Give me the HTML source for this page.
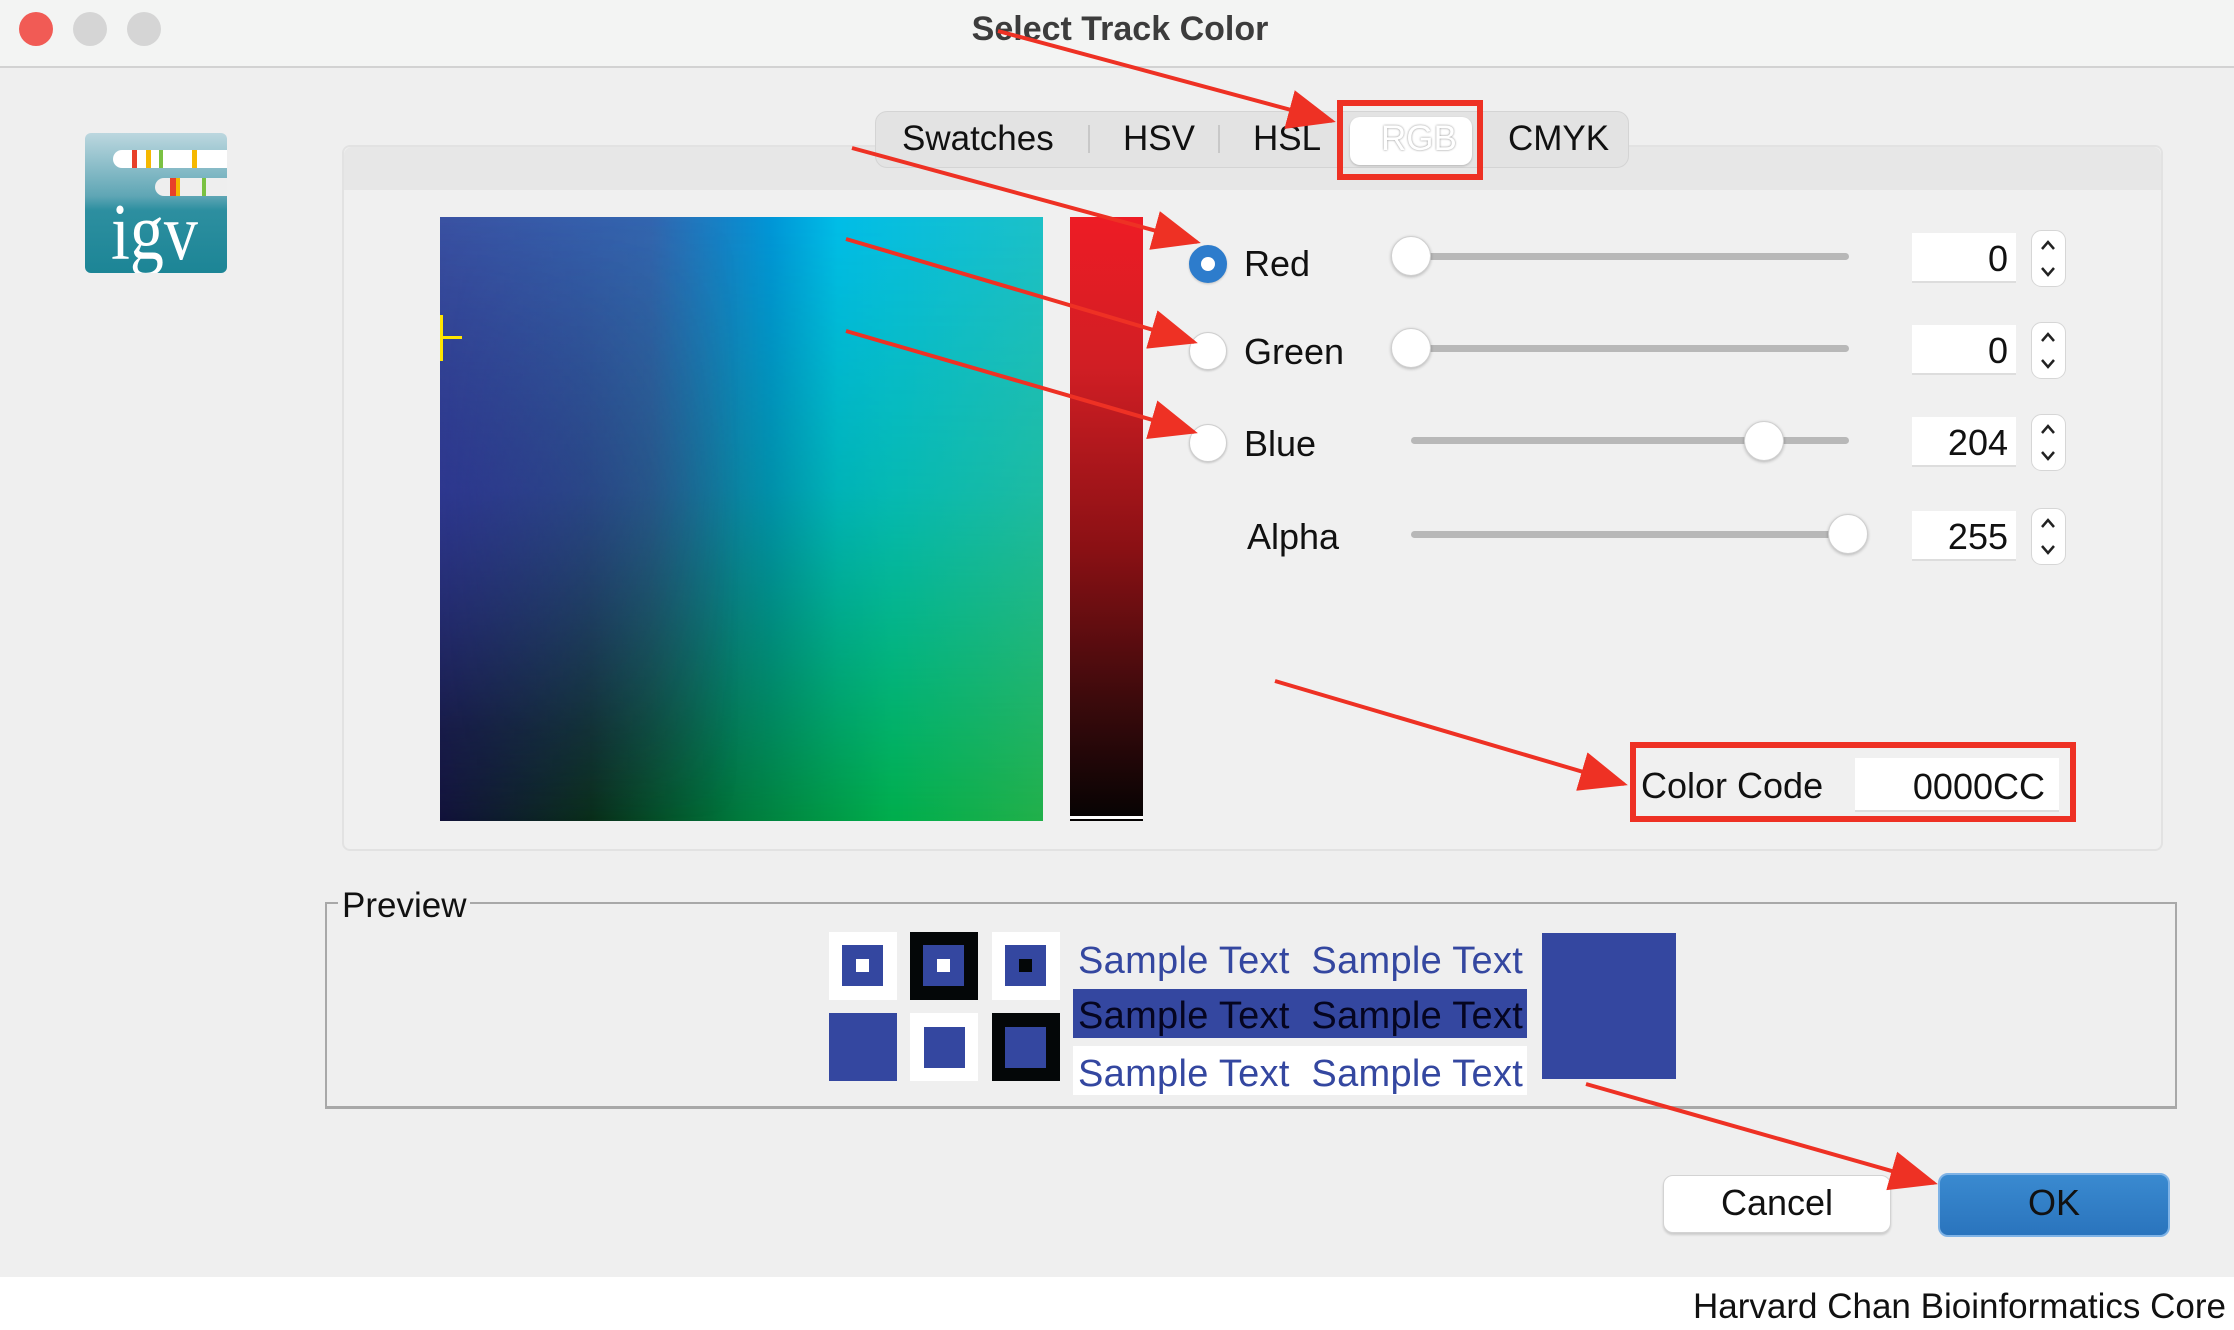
<!DOCTYPE html>
<html><head><meta charset="utf-8"><style>
*{margin:0;padding:0;box-sizing:border-box}
body{width:2234px;height:1330px;background:#efefef;position:relative;overflow:hidden;font-family:"Liberation Sans",sans-serif;color:#111}
.a{position:absolute}
.t{font-size:36px;line-height:1;white-space:nowrap}
.radio{width:38px;height:38px;border-radius:50%;background:#fff;border:1px solid #cfcfcf;box-shadow:0 1px 2px rgba(0,0,0,.2)}
.track{height:7px;background:#b8b8b8;border-radius:4px}
.knob{width:40px;height:40px;border-radius:50%;background:#fff;border:1px solid #d0d0d0;box-shadow:0 1px 3px rgba(0,0,0,.25)}
.num{width:104px;height:50px;background:#fff;border-bottom:2px solid #ddd;font-size:36px;text-align:right;padding:5px 8px 0 0}
.st{font-size:38px;color:#3447a0;line-height:1;letter-spacing:0.3px}
</style></head><body>
<div class="a" style="left:0;top:0;width:2234px;height:68px;background:#f3f4f3;border-bottom:2px solid #d2d2d2"></div>
<div class="a" style="left:19px;top:12px;width:34px;height:34px;border-radius:50%;background:#f15b55"></div>
<div class="a" style="left:73px;top:12px;width:34px;height:34px;border-radius:50%;background:#d5d5d5"></div>
<div class="a" style="left:127px;top:12px;width:34px;height:34px;border-radius:50%;background:#d5d5d5"></div>
<div class="a t" style="left:0;width:2240px;top:12px;text-align:center;font-weight:bold;font-size:34px;color:#3c3c3c">Select Track Color</div>
<div class="a" style="left:85px;top:133px;width:142px;height:140px;border-radius:6px;background:linear-gradient(#bcd7df,#5fa6b5 45%,#2d8fa0 55%,#1c8596);overflow:hidden">
 <div class="a" style="left:28px;top:17px;width:114px;height:18px;background:#fff;border-radius:9px 0 0 9px"></div>
 <div class="a" style="left:47px;top:17px;width:5px;height:18px;background:#e8402a"></div>
 <div class="a" style="left:61px;top:17px;width:5px;height:18px;background:#f5b800"></div>
 <div class="a" style="left:74px;top:17px;width:4px;height:18px;background:#7ac142"></div>
 <div class="a" style="left:107px;top:17px;width:5px;height:18px;background:#f5b800"></div>
 <div class="a" style="left:70px;top:45px;width:72px;height:18px;background:#eee;border-radius:9px 0 0 9px"></div>
 <div class="a" style="left:85px;top:45px;width:6px;height:18px;background:#e8402a"></div>
 <div class="a" style="left:91px;top:45px;width:4px;height:18px;background:#f5b800"></div>
 <div class="a" style="left:117px;top:45px;width:4px;height:18px;background:#7ac142"></div>
 <div class="a" style="left:26px;top:60px;font-family:'Liberation Serif',serif;font-size:80px;color:#fff;line-height:1;transform:scaleX(0.85);transform-origin:left">igv</div>
</div>
<div class="a" style="left:342px;top:145px;width:1821px;height:706px;background:#f0f0f0;border:2px solid #e2e2e2;border-radius:8px"></div>
<div class="a" style="left:344px;top:147px;width:1817px;height:43px;background:#e7e7e7;border-radius:8px 8px 0 0"></div>
<div class="a" style="left:875px;top:111px;width:754px;height:57px;background:#e3e3e3;border:1px solid #d4d4d4;border-radius:12px"></div>
<div class="a t" style="left:902px;top:121px;font-size:35px">Swatches</div>
<div class="a" style="left:1088px;top:125px;width:2px;height:28px;background:#c8c8c8"></div>
<div class="a t" style="left:1123px;top:121px;font-size:35px">HSV</div>
<div class="a" style="left:1218px;top:125px;width:2px;height:28px;background:#c8c8c8"></div>
<div class="a t" style="left:1253px;top:121px;font-size:35px">HSL</div>
<div class="a" style="left:1350px;top:117px;width:122px;height:48px;background:#fff;border-radius:10px;box-shadow:0 1px 2px rgba(0,0,0,.2)"></div>
<div class="a t" style="left:1381px;top:121px;font-size:35px;color:#fff;text-shadow:0 0 2px #888">RGB</div>
<div class="a t" style="left:1508px;top:121px;font-size:35px">CMYK</div>
<div class="a" style="left:1337px;top:100px;width:146px;height:80px;border:6px solid #ee3124"></div>
<div class="a" style="left:440px;top:217px;width:603px;height:604px;background:linear-gradient(to right,#12123a,#0a2e1a 25%,#007a3c 50%,#00ae4c 75%,#22b04a)"></div>
<div class="a" style="left:440px;top:217px;width:603px;height:604px;background:linear-gradient(to right,#3a52a3,#3366b0 35%,#0096d8 55%,#00bde8 66%,#1cc0c8);-webkit-mask-image:linear-gradient(to bottom,#000,rgba(0,0,0,.7) 45%,rgba(0,0,0,0) 100%)"></div>
<div class="a" style="left:440px;top:217px;width:300px;height:604px;background:linear-gradient(to bottom,rgba(60,80,170,0),rgba(45,50,150,.6) 45%,rgba(20,20,60,.3) 85%,rgba(0,0,0,0));-webkit-mask-image:linear-gradient(to right,#000,rgba(0,0,0,0))"></div>
<div class="a" style="left:440px;top:315px;width:3px;height:46px;background:#ffe600"></div>
<div class="a" style="left:440px;top:336px;width:22px;height:3px;background:#ffe600"></div>
<div class="a" style="left:1070px;top:217px;width:73px;height:604px;background:linear-gradient(#ee1c25,#d01e24 25%,#8a1014 55%,#3c0a0c 80%,#050303)"></div>
<div class="a" style="left:1070px;top:816px;width:73px;height:3px;background:#fff"></div>
<div class="a radio" style="left:1189px;top:245px;background:#2d7ccc;border-color:#2d7ccc"></div>
<div class="a" style="left:1201px;top:257px;width:14px;height:14px;border-radius:50%;background:#fff"></div>
<div class="a radio" style="left:1189px;top:332px"></div>
<div class="a radio" style="left:1189px;top:424px"></div>
<div class="a t" style="left:1244px;top:246px">Red</div>
<div class="a t" style="left:1244px;top:334px">Green</div>
<div class="a t" style="left:1244px;top:426px">Blue</div>
<div class="a t" style="left:1247px;top:519px">Alpha</div>
<div class="a track" style="left:1411px;top:253px;width:438px"></div>
<div class="a knob" style="left:1391px;top:236px"></div>
<div class="a track" style="left:1411px;top:345px;width:438px"></div>
<div class="a knob" style="left:1391px;top:328px"></div>
<div class="a track" style="left:1411px;top:437px;width:438px"></div>
<div class="a knob" style="left:1744px;top:421px"></div>
<div class="a track" style="left:1411px;top:531px;width:438px"></div>
<div class="a knob" style="left:1828px;top:514px"></div>
<div class="a num" style="left:1912px;top:233px">0</div>
<div class="a num" style="left:1912px;top:325px">0</div>
<div class="a num" style="left:1912px;top:417px">204</div>
<div class="a num" style="left:1912px;top:511px">255</div>
<svg class="a" style="left:0;top:0" width="2234" height="1330">
<g fill="#fff" stroke="#d6d6d6"><rect x="2031.5" y="230.5" width="34" height="56" rx="10"/><rect x="2031.5" y="322.5" width="34" height="56" rx="10"/><rect x="2031.5" y="414.5" width="34" height="56" rx="10"/><rect x="2031.5" y="508.5" width="34" height="56" rx="10"/></g>
<g fill="none" stroke="#222" stroke-width="2.5">
<path d="M2042 249l6-7 6 7M2042 268l6 7 6-7"/><path d="M2042 341l6-7 6 7M2042 360l6 7 6-7"/><path d="M2042 433l6-7 6 7M2042 452l6 7 6-7"/><path d="M2042 527l6-7 6 7M2042 546l6 7 6-7"/>
</g></svg>
<div class="a t" style="left:1641px;top:768px">Color Code</div>
<div class="a" style="left:1855px;top:758px;width:204px;height:54px;background:#fff;border-bottom:2px solid #ddd;font-size:36px;text-align:right;padding:8px 14px 0 0">0000CC</div>
<div class="a" style="left:1630px;top:742px;width:446px;height:80px;border:6px solid #ee3124"></div>
<div class="a" style="left:325px;top:902px;width:1852px;height:207px;border:2px solid #a8a8a8;border-bottom-width:3px"></div>
<div class="a t" style="left:338px;top:888px;background:#efefef;padding:0 4px;font-size:35px">Preview</div>
<div class="a" style="left:829px;top:932px;width:68px;height:68px;background:#fff"></div>
<div class="a" style="left:842px;top:945px;width:41px;height:41px;background:#3447a0"></div>
<div class="a" style="left:856px;top:959px;width:13px;height:13px;background:#fff"></div>
<div class="a" style="left:910px;top:932px;width:68px;height:68px;background:#040708"></div>
<div class="a" style="left:923px;top:945px;width:41px;height:41px;background:#3447a0"></div>
<div class="a" style="left:937px;top:959px;width:13px;height:13px;background:#fff"></div>
<div class="a" style="left:992px;top:932px;width:68px;height:68px;background:#fff"></div>
<div class="a" style="left:1005px;top:945px;width:41px;height:41px;background:#3447a0"></div>
<div class="a" style="left:1019px;top:959px;width:13px;height:13px;background:#040708"></div>
<div class="a" style="left:829px;top:1013px;width:68px;height:68px;background:#3447a0"></div>
<div class="a" style="left:910px;top:1013px;width:68px;height:68px;background:#fff"></div>
<div class="a" style="left:924px;top:1027px;width:41px;height:41px;background:#3447a0"></div>
<div class="a" style="left:992px;top:1013px;width:68px;height:68px;background:#040708"></div>
<div class="a" style="left:1005px;top:1027px;width:41px;height:41px;background:#3447a0"></div>
<div class="a st" style="left:1078px;top:942px">Sample Text&nbsp; Sample Text</div>
<div class="a" style="left:1073px;top:989px;width:454px;height:49px;background:#3447a0"></div>
<div class="a st" style="left:1078px;top:997px;color:#050520">Sample Text&nbsp; Sample Text</div>
<div class="a" style="left:1073px;top:1046px;width:454px;height:49px;background:#fff"></div>
<div class="a st" style="left:1078px;top:1055px">Sample Text&nbsp; Sample Text</div>
<div class="a" style="left:1542px;top:933px;width:134px;height:146px;background:#3447a0"></div>
<div class="a" style="left:1663px;top:1175px;width:228px;height:58px;background:#fff;border-radius:10px;border:1px solid #d3d3d3;box-shadow:0 2px 2px rgba(0,0,0,.15)"></div>
<div class="a t" style="left:1663px;width:228px;top:1185px;text-align:center;font-size:36px">Cancel</div>
<div class="a" style="left:1938px;top:1173px;width:232px;height:64px;background:linear-gradient(#3a8ad0,#2a74bd);border-radius:10px;border:2px solid #7fb3e6"></div>
<div class="a t" style="left:1938px;width:232px;top:1185px;text-align:center;font-size:36px">OK</div>
<div class="a" style="left:0;top:1277px;width:2234px;height:53px;background:#fff"></div>
<div class="a t" style="right:8px;top:1289px;font-size:35px">Harvard Chan Bioinformatics Core</div>
<svg class="a" style="left:0;top:0" width="2234" height="1330">
<defs><marker id="m" markerWidth="12" markerHeight="10" refX="11" refY="5" orient="auto" markerUnits="strokeWidth"><path d="M0,0 L12,5 L0,10 z" fill="#ee3124"/></marker></defs>
<g stroke="#ee3124" stroke-width="4" fill="none" marker-end="url(#m)">
<line x1="998" y1="31" x2="1332" y2="121"/>
<line x1="852" y1="148" x2="1197" y2="242"/>
<line x1="846" y1="239" x2="1194" y2="342"/>
<line x1="846" y1="331" x2="1194" y2="432"/>
<line x1="1275" y1="681" x2="1624" y2="784"/>
<line x1="1586" y1="1084" x2="1934" y2="1183"/>
</g></svg>
</body></html>
